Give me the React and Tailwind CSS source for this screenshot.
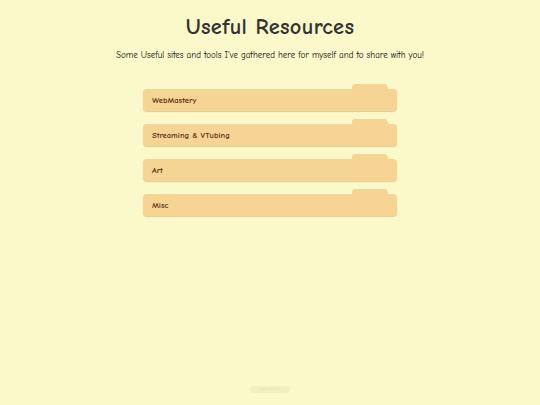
import React from 'react'

const folders = ['WebMastery', 'Streaming & VTubing', 'Art', 'Misc']

function Folder({ label }) {
  return (
    <div className="relative pt-[5px]">
      <div
        className="absolute top-0 right-[7px] w-[38px] h-[8px] bg-[#f6d594] rounded-tl-[3px]"
        style={{ clipPath: 'polygon(0 0, 90% 0, 100% 100%, 0 100%)' }}
      />
      <div className="relative h-[22px] bg-[#f6d594] rounded-[4px] shadow-[0_1px_1px_rgba(170,130,60,0.35)] flex items-center pl-[9px]">
        <span className="text-[8.5px] font-bold text-[#5e3315]">{label}</span>
      </div>
    </div>
  )
}

export default function App() {
  return (
    <div
      className="min-h-screen bg-[#fbf8c9] flex flex-col items-center"
      style={{ fontFamily: '"Comic Sans MS", "Comic Neue", "Liberation Sans", sans-serif' }}
    >
      <h1 className="mt-[12px] text-[22.4px] leading-[30px] font-bold text-[#333333] tracking-[0.3px]">
        Useful Resources
      </h1>
      <p className="mt-[7px] text-[9px] leading-[12px] text-[#111111]">
        Some Useful sites and tools I've gathered here for myself and to share with you!
      </p>
      <div className="mt-[23px] w-[254px] flex flex-col gap-[8px]">
        {folders.map((f) => (
          <Folder key={f} label={f} />
        ))}
      </div>
      <div className="mt-auto mb-[12px] w-[40px] h-[7px] rounded-full bg-[#f3efbf] flex items-center justify-center">
        <span className="text-[3px] text-[#e6e1ae] leading-none">made with love</span>
      </div>
    </div>
  )
}
